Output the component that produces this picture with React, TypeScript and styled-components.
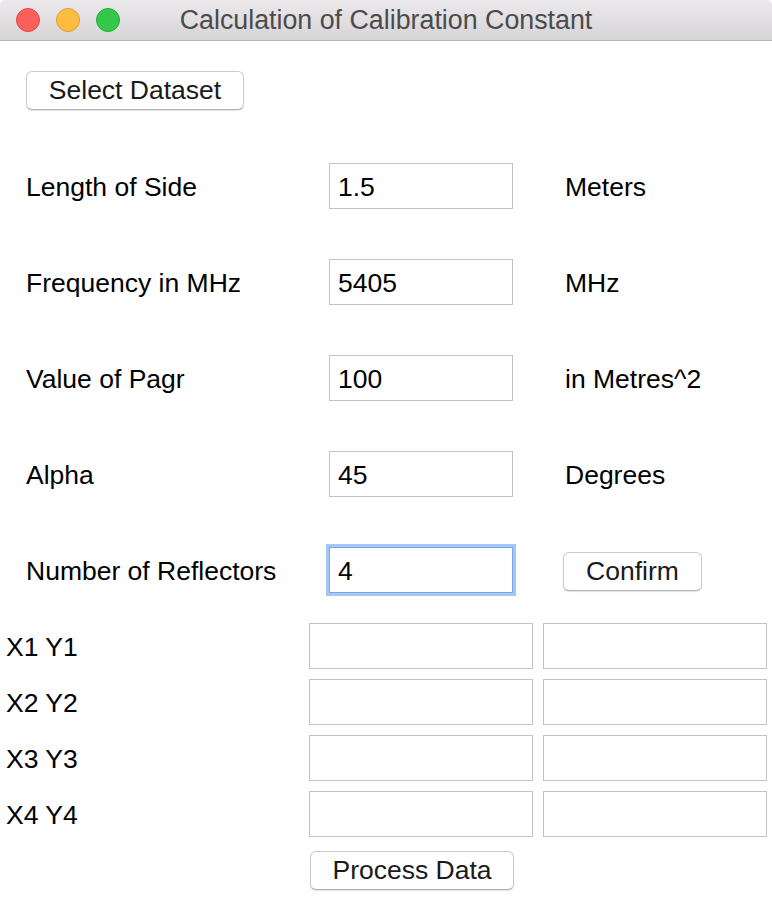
import { Fragment } from 'react';
import styled, { createGlobalStyle } from 'styled-components';

const GlobalStyle = createGlobalStyle`
  html, body {
    margin: 0;
    padding: 0;
    background: #ffffff;
  }
  body {
    font-family: 'Liberation Sans', Helvetica, Arial, sans-serif;
    color: #000000;
  }
`;

const Window = styled.div`
  width: 772px;
  height: 898px;
  overflow: hidden;
  background: #ffffff;
  display: flex;
  flex-direction: column;
`;

const TitleBar = styled.div`
  height: 40px;
  display: grid;
  grid-template-columns: 1fr auto 1fr;
  align-items: center;
  background: linear-gradient(to bottom, #ebe9eb 0%, #d6d4d6 100%);
  border-bottom: 1px solid #b4b4b4;
  border-radius: 5px 5px 0 0;
`;

const Lights = styled.div`
  display: flex;
  gap: 16px;
  padding-left: 16px;
`;

const Light = styled.span<{ $fill: string; $edge: string }>`
  width: 22px;
  height: 22px;
  border-radius: 50%;
  background: ${(p) => p.$fill};
  border: 1px solid ${(p) => p.$edge};
`;

const Title = styled.div`
  font-size: 26.8px;
  color: #4b4b4b;
  line-height: 40px;
`;

const Content = styled.div`
  display: flex;
  flex-direction: column;
`;

const Button = styled.button<{ $width: number }>`
  width: ${(p) => p.$width}px;
  height: 39px;
  padding: 0;
  font-family: inherit;
  font-size: 26.5px;
  color: #1a1a1a;
  background: #ffffff;
  border: 1px solid #cbcbcb;
  border-bottom-color: #b3b3b3;
  border-radius: 6px;
  box-shadow: 0 1px 1px rgba(0, 0, 0, 0.12);
`;

const TopBar = styled.div`
  padding: 30px 0 0 26px;
`;

const Form = styled.div`
  display: grid;
  grid-template-columns: 303px 236px 1fr;
  grid-auto-rows: 46px;
  row-gap: 50px;
  align-items: center;
  padding: 53px 0 0 26px;
`;

const Label = styled.div`
  font-size: 26.5px;
  line-height: 30px;
  padding-top: 2px;
`;

const Field = styled.input<{ $focused?: boolean; $width: number }>`
  box-sizing: border-box;
  width: ${(p) => p.$width}px;
  height: 46px;
  padding: 2px 8px 0;
  font-family: inherit;
  font-size: 26.5px;
  color: #000000;
  background: #ffffff;
  border: 1px solid ${(p) => (p.$focused ? '#7aa7e3' : '#c2c2c2')};
  box-shadow: ${(p) => (p.$focused ? '0 0 0 3px #a2c8f6' : 'none')};
  border-radius: 0;
  outline: none;
`;

const ConfirmCell = styled.div`
  margin-left: -2px;
  padding-top: 2px;
`;

const Coords = styled.div`
  display: grid;
  grid-template-columns: 293px 224px 224px;
  column-gap: 10px;
  grid-auto-rows: 46px;
  row-gap: 10px;
  align-items: center;
  padding: 30px 0 0 6px;
`;

const BottomBar = styled.div`
  padding: 14px 0 0 310px;
`;

const params = [
  { label: 'Length of Side', value: '1.5', unit: 'Meters' },
  { label: 'Frequency in MHz', value: '5405', unit: 'MHz' },
  { label: 'Value of Pagr', value: '100', unit: 'in Metres^2' },
  { label: 'Alpha', value: '45', unit: 'Degrees' },
];

const App = () => {
  return (
    <>
      <GlobalStyle />
      <Window>
        <TitleBar>
          <Lights>
            <Light $fill="#fc605c" $edge="#df4a45" />
            <Light $fill="#fdbc40" $edge="#de9f34" />
            <Light $fill="#34c84a" $edge="#27a93a" />
          </Lights>
          <Title>Calculation of Calibration Constant</Title>
          <div />
        </TitleBar>
        <Content>
          <TopBar>
            <Button $width={218}>Select Dataset</Button>
          </TopBar>
          <Form>
            {params.map((p) => (
              <Fragment key={p.label}>
                <Label>{p.label}</Label>
                <Field $width={184} value={p.value} readOnly />
                <Label>{p.unit}</Label>
              </Fragment>
            ))}
            <Label>Number of Reflectors</Label>
            <Field $width={184} $focused value="4" readOnly />
            <ConfirmCell>
              <Button $width={139}>Confirm</Button>
            </ConfirmCell>
          </Form>
          <Coords>
            {[1, 2, 3, 4].map((n) => (
              <Fragment key={n}>
                <Label>{`X${n} Y${n}`}</Label>
                <Field $width={224} value="" readOnly />
                <Field $width={224} value="" readOnly />
              </Fragment>
            ))}
          </Coords>
          <BottomBar>
            <Button $width={204}>Process Data</Button>
          </BottomBar>
        </Content>
      </Window>
    </>
  );
};

export default App;
